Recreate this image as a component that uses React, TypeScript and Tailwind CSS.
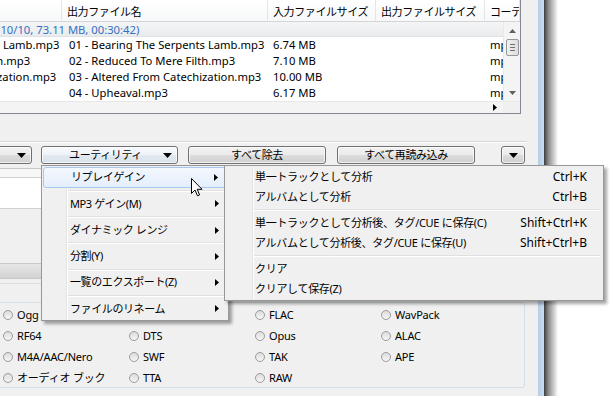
import React from 'react';

const ROWS = [
  { name: '01 - Bearing The Serpents Lamb.mp3', size: '6.74 MB' },
  { name: '02 - Reduced To Mere Filth.mp3', size: '7.10 MB' },
  { name: '03 - Altered From Catechization.mp3', size: '10.00 MB' },
  { name: '04 - Upheaval.mp3', size: '6.17 MB' },
];

const MENU = ['リプレイゲイン', 'MP3 ゲイン(M)', 'ダイナミック レンジ', '分割(Y)', '一覧のエクスポート(Z)', 'ファイルのリネーム'];

const SUBMENU = [
  [
    { label: '単一トラックとして分析', key: 'Ctrl+K' },
    { label: 'アルバムとして分析', key: 'Ctrl+B' },
  ],
  [
    { label: '単一トラックとして分析後、タグ/CUE に保存(C)', key: 'Shift+Ctrl+K' },
    { label: 'アルバムとして分析後、タグ/CUE に保存(U)', key: 'Shift+Ctrl+B' },
  ],
  [
    { label: 'クリア', key: '' },
    { label: 'クリアして保存(Z)', key: '' },
  ],
];

const FORMATS = [
  ['Ogg', '', 'FLAC', 'WavPack'],
  ['RF64', 'DTS', 'Opus', 'ALAC'],
  ['M4A/AAC/Nero', 'SWF', 'TAK', 'APE'],
  ['オーディオ ブック', 'TTA', 'RAW', ''],
];

const BTN =
  'h-[18px] shrink-0 rounded-[3px] border border-[#707070] bg-[linear-gradient(#f2f2f2_0%,#ebebeb_50%,#dddddd_50%,#cfcfcf_100%)] shadow-[inset_0_0_0_1px_rgba(255,255,255,0.7)] flex items-center tracking-[-0.4px]';

function DownTri() {
  return (
    <svg width="9" height="5" viewBox="0 0 9 5">
      <polygon points="0,0 9,0 4.5,5" fill="#000" />
    </svg>
  );
}

function RightTri() {
  return (
    <svg width="4" height="7" viewBox="0 0 4 7">
      <polygon points="0,0 4,3.5 0,7" fill="#000" />
    </svg>
  );
}

function Radio({ label }: { label: string }) {
  return (
    <div className="w-[126px] h-[21px] flex items-center gap-[4px] shrink-0">
      {label && (
        <>
          <span className="w-[10px] h-[10px] rounded-full border border-[#9c9c9c] bg-[linear-gradient(#dcdcdc,#f6f6f6)] shrink-0" />
          <span className="leading-[21px] whitespace-nowrap tracking-[-0.2px]">{label}</span>
        </>
      )}
    </div>
  );
}

export default function App() {
  return (
    <div className="relative w-[616px] h-[396px] bg-white overflow-hidden font-['Noto_Sans','Noto_Sans_CJK_JP',sans-serif] text-[11px] text-black">
      <div className="flex h-full">
        {/* window client area */}
        <div className="w-[538px] h-full bg-[#f0f0f0] flex flex-col overflow-hidden shrink-0">
          {/* file list */}
          <div className="-ml-[141px] w-[662px] h-[114px] shrink-0 bg-white border-r border-b border-[#828790] flex flex-col">
            <div className="h-[22px] shrink-0 flex border-b border-[#d5d5d5] bg-[linear-gradient(#ffffff,#f7f8f9)] tracking-[-0.4px]">
              {[
                ['入力ファイル名', 'w-[203px]'],
                ['出力ファイル名', 'w-[206px]'],
                ['入力ファイルサイズ', 'w-[108px]'],
                ['出力ファイルサイズ', 'w-[109px]'],
                ['コーデック', 'flex-1'],
              ].map(([t, w]) => (
                <div key={t} className={`${w} shrink-0 border-r border-[#e5e5e5] pl-[5px] pt-[3px] flex items-center whitespace-nowrap overflow-hidden`}>
                  {t}
                </div>
              ))}
            </div>
            <div className="flex flex-1 min-h-0">
              <div className="flex-1 flex flex-col overflow-hidden text-[11.25px]">
                <div className="h-[15px] shrink-0 pl-[138px] bg-[linear-gradient(#f4f5f6,#e9ebed)] border-b border-[#dfe2e5] text-[#3571c3] leading-[15px] whitespace-nowrap">
                  (10/10, 73.11 MB, 00:30:42)
                </div>
                {ROWS.map((r) => (
                  <div key={r.name} className="h-[16px] shrink-0 flex leading-[16px] whitespace-nowrap">
                    <div className="w-[203px] shrink-0 pl-[5px] overflow-hidden">{r.name}</div>
                    <div className="w-[206px] shrink-0 pl-[7px] overflow-hidden">{r.name}</div>
                    <div className="w-[108px] shrink-0 pl-[5px]">{r.size}</div>
                    <div className="w-[109px] shrink-0" />
                    <div className="flex-1 pl-[5px] overflow-hidden">mp3</div>
                  </div>
                ))}
              </div>
              {/* vertical scrollbar */}
              <div className="w-[17px] shrink-0 bg-[#f4f4f4] border-l border-[#e8e8e8] flex flex-col items-center">
                <div className="h-[17px] flex items-center justify-center">
                  <svg width="7" height="4" viewBox="0 0 7 4">
                    <polygon points="0,4 7,4 3.5,0" fill="#606060" />
                  </svg>
                </div>
                <div className="w-[13px] h-[17px] rounded-[2px] border border-[#979797] bg-[linear-gradient(90deg,#f0f0f0,#dedede)] flex flex-col items-center justify-center gap-[2px]">
                  <span className="w-[5px] h-px bg-[#707070]" />
                  <span className="w-[5px] h-px bg-[#707070]" />
                  <span className="w-[5px] h-px bg-[#707070]" />
                </div>
                <div className="flex-1" />
                <div className="h-[17px] flex items-center justify-center">
                  <svg width="7" height="4" viewBox="0 0 7 4">
                    <polygon points="0,0 7,0 3.5,4" fill="#606060" />
                  </svg>
                </div>
              </div>
            </div>
            {/* horizontal scrollbar */}
            <div className="h-[12px] shrink-0 flex border-t border-[#e8e8e8] bg-[#f4f4f4]">
              <div className="flex-1" />
              <div className="w-[17px] flex items-center justify-center">
                <RightTri />
              </div>
              <div className="w-[17px] bg-[#f0f0f0]" />
            </div>
          </div>

          <div className="h-[27px] shrink-0" />
          <div className="h-[2px] w-[527px] shrink-0 border-t border-[#d5d5d5] border-b border-b-white" />
          <div className="h-[3px] shrink-0" />

          {/* button row */}
          <div className="h-[18px] shrink-0 flex -ml-[106px]">
            <div className={`${BTN} w-[138px] justify-end pr-[5px]`}>
              <DownTri />
            </div>
            <div className={`${BTN} w-[137px] ml-[9px] border-[#3c7fb1] bg-[linear-gradient(#f6f9fc_0%,#eef3f8_50%,#e2e9f0_50%,#d9e2ea_100%)]`}>
              <span className="flex-1 text-center pl-[6px]">ユーティリティ</span>
              <span className="pr-[5px] flex">
                <DownTri />
              </span>
            </div>
            <div className={`${BTN} w-[138px] ml-[10px] justify-center`}>すべて除去</div>
            <div className={`${BTN} w-[138px] ml-[11px] justify-center`}>すべて再読み込み</div>
            <div className={`${BTN} w-[24px] ml-[26px] justify-center`}>
              <DownTri />
            </div>
          </div>

          <div className="h-[4px] shrink-0" />
          <div className="h-[9px] shrink-0 w-[527px] border-t border-[#c9c9c9] bg-[#f7f7f7]" />
          <div className="h-[32px] shrink-0 w-[527px] border-t border-b border-[#d0d0d0] bg-white" />
          <div className="h-[54px] shrink-0" />
          <div className="h-[16px] shrink-0 w-[527px] border-t border-b border-[#c8c8c8] bg-[linear-gradient(#e6e6e6,#d3d3d3)]" />
          <div className="h-[4px] shrink-0" />
          <div className="h-px shrink-0 w-[527px] bg-[#dcdcdc]" />
          <div className="h-[18px] shrink-0" />

          {/* output format group */}
          <div className="-ml-[10px] w-[535px] h-[86px] shrink-0 rounded-[3px] border border-[#d5dfe5] pl-[12px] pt-[1px] flex flex-col">
            {FORMATS.map((row, i) => (
              <div key={i} className="flex">
                {row.map((f, j) => (
                  <Radio key={j} label={f} />
                ))}
              </div>
            ))}
          </div>
        </div>

        {/* window frame + shadow */}
        <div className="w-[6px] h-full shrink-0 bg-[linear-gradient(90deg,#b5cde6,#c9ddf1)]" />
        <div className="w-[14px] h-full shrink-0 bg-[linear-gradient(90deg,#3c3c3c,#8a8a8a_30%,#ffffff)]" />
      </div>

      {/* utility menu */}
      <div className="absolute left-[41px] top-[165px] w-[188px] border border-[#979797] bg-[#f0f0f0] p-px shadow-[3px_3px_3px_rgba(0,0,0,0.35)] z-10 tracking-[-0.4px]">
        <div className="relative flex flex-col">
          <div className="absolute left-[23px] top-0 bottom-0 w-[2px] border-l border-[#e2e3e3] border-r border-r-white" />
          {MENU.map((m, i) => (
            <React.Fragment key={m}>
              {i > 0 && (
                <div className="h-[5.3px] flex items-center pl-[23px] pr-[2px]">
                  <div className="h-[2px] w-full border-t border-[#e0e0e0] border-b border-b-white" />
                </div>
              )}
              <div
                className={`relative h-[21px] flex items-center pl-[27px] pr-[8px] ${
                  i === 0 ? 'rounded-[3px] border border-[#a8c8ef] bg-[linear-gradient(#f3f8fe,#e4eefb)] pl-[26px]' : ''
                }`}
              >
                <span className="flex-1 whitespace-nowrap">{m}</span>
                <RightTri />
              </div>
            </React.Fragment>
          ))}
        </div>
      </div>

      {/* replay gain submenu */}
      <div className="absolute left-[224px] top-[165px] w-[380px] border border-[#979797] bg-[#f0f0f0] p-px shadow-[3px_3px_3px_rgba(0,0,0,0.35)] z-20">
        <div className="relative flex flex-col">
          <div className="absolute left-[26px] top-0 bottom-0 w-[2px] border-l border-[#e2e3e3] border-r border-r-white" />
          {SUBMENU.map((group, gi) => (
            <React.Fragment key={gi}>
              {gi > 0 && (
                <div className="h-[6px] flex items-center pl-[26px] pr-[2px]">
                  <div className="h-[2px] w-full border-t border-[#e0e0e0] border-b border-b-white" />
                </div>
              )}
              {group.map((it) => (
                <div key={it.label} className="h-[20px] flex items-center justify-between pl-[29px] pr-[15px] whitespace-nowrap">
                  <span className="tracking-[-0.3px]">{it.label}</span>
                  <span className="text-[12px]">{it.key}</span>
                </div>
              ))}
            </React.Fragment>
          ))}
        </div>
      </div>

      {/* mouse pointer */}
      <svg className="absolute left-[191px] top-[178px] z-30" width="12" height="19" viewBox="0 0 12 19">
        <path d="M0.5 0.5 L0.5 15.5 L4 12 L6.5 17.8 L8.6 16.9 L6.2 11.3 L11 11.3 Z" fill="#fff" stroke="#000" strokeWidth="1" strokeLinejoin="round" />
      </svg>
    </div>
  );
}
